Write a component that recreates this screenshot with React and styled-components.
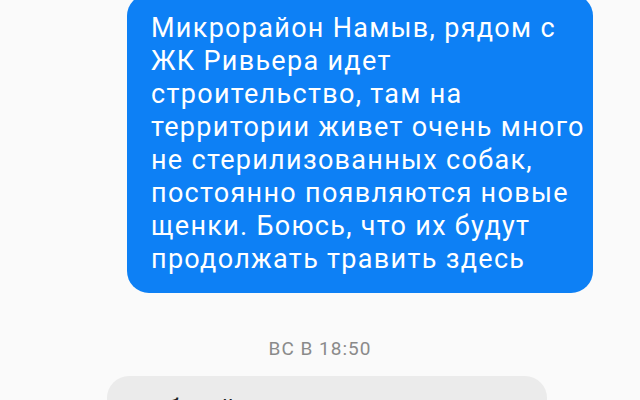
import React from 'react';
import styled, { createGlobalStyle } from 'styled-components';

const GlobalStyle = createGlobalStyle`
  html, body {
    margin: 0;
    padding: 0;
    background: #fafafa;
    font-family: Roboto, "Noto Sans", sans-serif;
  }
`;

const Screen = styled.div`
  width: 640px;
  height: 400px;
  overflow: hidden;
  display: flex;
  flex-direction: column;
  background: #fafafa;
`;

const Row = styled.div`
  display: flex;
  justify-content: ${props => (props.out ? 'flex-end' : 'flex-start')};
  padding: ${props => (props.out ? '0 47px 0 0' : '0 0 0 107px')};
`;

const Bubble = styled.div`
  width: ${props => props.width}px;
  box-sizing: border-box;
  margin-top: ${props => props.top || 0}px;
  padding: 18px 6px 17px 24px;
  border-radius: 22px;
  background: ${props => (props.out ? '#0d80f5' : '#ebebeb')};
  color: ${props => (props.out ? '#ffffff' : '#1e1e1e')};
  font-size: 27px;
  line-height: 33px;
  letter-spacing: 1.3px;
  white-space: nowrap;
`;

const Line = styled.div``;

const Stamp = styled.div`
  margin: 46px 0 18px;
  height: 19px;
  font-size: 19px;
  line-height: 19px;
  letter-spacing: 1px;
  text-align: center;
  color: #8a8a8a;
`;

const lines = [
  'Микрорайон Намыв, рядом с',
  'ЖК Ривьера идет',
  'строительство, там на',
  'территории живет очень много',
  'не стерилизованных собак,',
  'постоянно появляются новые',
  'щенки. Боюсь, что их будут',
  'продолжать травить здесь',
];

export default function App() {
  return (
    <Screen>
      <GlobalStyle />
      <Row out>
        <Bubble out width={466} top={-6}>
          {lines.map(l => (
            <Line key={l}>{l}</Line>
          ))}
        </Bubble>
      </Row>
      <Stamp>ВС В 18:50</Stamp>
      <Row>
        <Bubble width={440}>
          <Line>добрый человек, нужна помощь</Line>
        </Bubble>
      </Row>
    </Screen>
  );
}
